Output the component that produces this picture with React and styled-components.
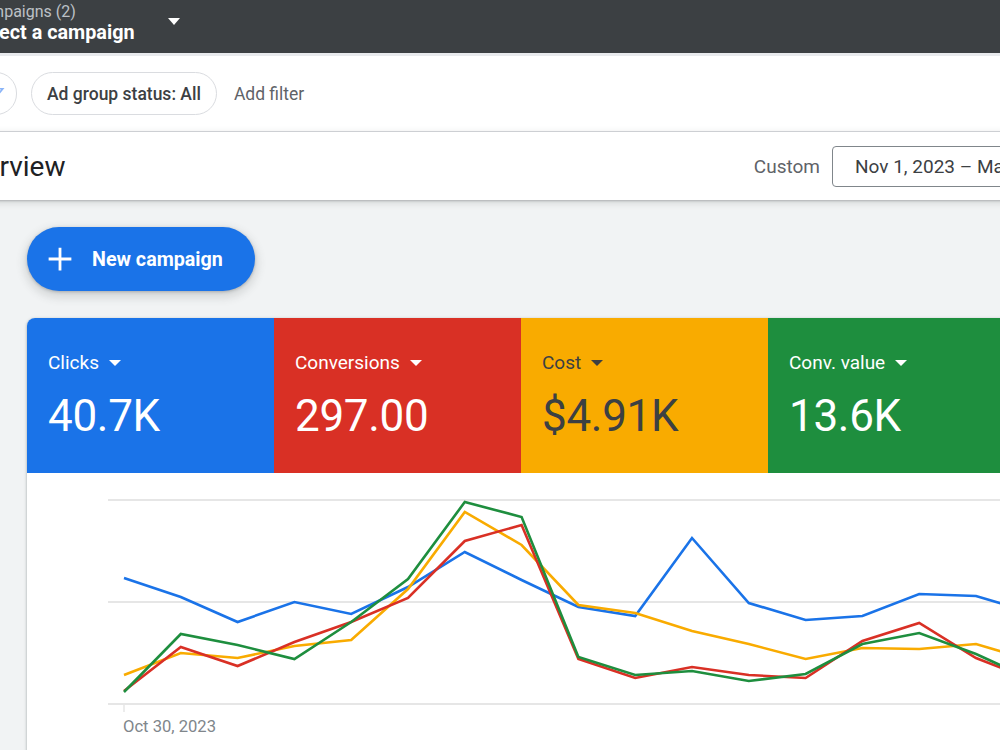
import React from "react";
import styled, { createGlobalStyle } from "styled-components";

const Global = createGlobalStyle`
  html, body { margin: 0; padding: 0; background: #f1f3f4; }
  body { font-family: Roboto, "Liberation Sans", Arial, sans-serif; }
  * { box-sizing: border-box; }
`;

const Viewport = styled.div`
  width: 1000px;
  height: 750px;
  overflow: hidden;
  background: #f1f3f4;
`;

const Page = styled.div`
  width: 1400px;
  margin-left: -200px;
`;

const TopBar = styled.div`
  height: 53px;
  background: #3c4043;
  display: flex;
  align-items: center;
  padding-left: 171px;
`;

const Picker = styled.div`
  display: flex;
  flex-direction: column;
  margin-top: -6px;
`;

const PickerLabel = styled.span`
  font-size: 16px;
  color: #bdc1c6;
  line-height: 18px;
`;

const PickerValue = styled.span`
  font-size: 19.8px;
  font-weight: 700;
  color: #ffffff;
  line-height: 24px;
`;

const Caret = styled.span`
  width: 0;
  height: 0;
  border-left: ${(p) => p.$w || 6}px solid transparent;
  border-right: ${(p) => p.$w || 6}px solid transparent;
  border-top: ${(p) => p.$h || 6}px solid ${(p) => p.$color || "#fff"};
  display: inline-block;
  margin-left: ${(p) => p.$gap || 8}px;
  align-self: ${(p) => p.$self || "center"};
  margin-top: ${(p) => p.$top || 0}px;
`;

const FilterBar = styled.div`
  height: 79px;
  border-top: 3px solid #e8eaed;
  background: #fff;
  display: flex;
  align-items: center;
  gap: 14px;
  padding-left: 175px;
  border-bottom: 1px solid #dadce0;
`;

const Chip = styled.div`
  height: 43px;
  min-width: 42px;
  border: 1px solid #dadce0;
  border-radius: 22px;
  display: flex;
  align-items: center;
  justify-content: center;
  padding: 0 ${(p) => (p.$icon ? 0 : 15)}px;
  font-size: 17.5px;
  font-weight: 500;
  color: #3c4043;
  white-space: nowrap;
`;

const AddFilter = styled.span`
  font-size: 17.5px;
  color: #5f6368;
  margin-left: 3px;
`;

const Header = styled.div`
  height: 68px;
  background: #fff;
  display: flex;
  align-items: center;
  padding: 0 8px 0 152px;
  box-shadow: 0 1px 2px rgba(60, 64, 67, 0.3), 0 2px 6px 2px rgba(60, 64, 67, 0.12);
  position: relative;
  z-index: 1;
`;

const Title = styled.h1`
  margin: 0;
  flex: 1;
  font-size: 28px;
  font-weight: 400;
  color: #202124;
`;

const RangeLabel = styled.span`
  font-size: 19px;
  color: #5f6368;
  margin-right: 12px;
`;

const DateBox = styled.div`
  width: 360px;
  height: 41px;
  border: 1px solid #80868b;
  border-radius: 4px;
  display: flex;
  align-items: center;
  padding-left: 22px;
  font-size: 19px;
  color: #3c4043;
  white-space: nowrap;
`;

const Main = styled.div`
  padding: 27px 0 0 227px;
  display: flex;
  flex-direction: column;
  align-items: flex-start;
`;

const NewButton = styled.button`
  height: 64px;
  width: 228px;
  border: none;
  border-radius: 32px;
  background: #1a73e8;
  color: #fff;
  display: flex;
  align-items: center;
  padding: 0 0 0 20px;
  gap: 19px;
  font-family: Roboto, "Liberation Sans", sans-serif;
  font-size: 19.7px;
  font-weight: 700;
  box-shadow: 0 1px 3px rgba(60, 64, 67, 0.3), 0 4px 8px 3px rgba(60, 64, 67, 0.15);
  cursor: pointer;
`;

const Card = styled.div`
  margin-top: 27px;
  width: 1150px;
  background: #fff;
  border-radius: 8px 8px 0 0;
  overflow: hidden;
  box-shadow: 0 1px 2px rgba(60, 64, 67, 0.3), 0 1px 3px 1px rgba(60, 64, 67, 0.15);
`;

const Tiles = styled.div`
  display: grid;
  grid-template-columns: repeat(4, 247px) 1fr;
  height: 155px;
`;

const Tile = styled.div`
  background: ${(p) => p.$bg};
  color: ${(p) => p.$fg};
  padding: 33px 0 0 21px;
  display: flex;
  flex-direction: column;
`;

const TileLabel = styled.div`
  display: flex;
  align-items: center;
  font-size: 19px;
  line-height: 24px;
`;

const TileValue = styled.div`
  font-size: 44px;
  font-weight: 400;
  line-height: 52px;
  margin-top: 15px;
  letter-spacing: -0.3px;
`;

const ChartArea = styled.div`
  height: 280px;
`;

const X0 = 97;
const DX = 56.8;
const series = [
  {
    color: "#1a73e8",
    ys: [578, 597, 622, 602, 614, 587, 552, 580, 607, 616, 538, 603, 620, 616, 594, 596, 613],
  },
  {
    color: "#f9ab00",
    ys: [675, 653, 658, 646, 640, 589, 512, 545, 605, 613, 631, 644, 659, 648, 649, 644, 661],
  },
  {
    color: "#d93025",
    ys: [691, 647, 666, 642, 622, 598, 541, 525, 659, 678, 667, 675, 678, 641, 623, 658, 680],
  },
  {
    color: "#1e8e3e",
    ys: [692, 634, 645, 659, 622, 579, 502, 517, 657, 675, 671, 681, 674, 644, 633, 654, 680],
  },
];

function Chart() {
  return (
    <svg width="1150" height="280" viewBox="0 0 1150 280">
      {[27, 129, 231].map((y) => (
        <line key={y} x1="81" x2="1150" y1={y} y2={y} stroke="#e6e6e6" strokeWidth="2" />
      ))}
      <line x1={X0} x2={X0} y1="231" y2="239" stroke="#e6e6e6" strokeWidth="1.5" />
      {series.map((s) => (
        <polyline
          key={s.color}
          fill="none"
          stroke={s.color}
          strokeWidth="2.6"
          strokeLinejoin="miter"
          points={s.ys.map((y, i) => `${X0 + i * DX},${y - 473}`).join(" ")}
        />
      ))}
      <text x="96" y="259" fontSize="16.6" fill="#80868b" fontFamily="Roboto, sans-serif">
        Oct 30, 2023
      </text>
    </svg>
  );
}

const tiles = [
  { label: "Clicks", value: "40.7K", bg: "#1a73e8", fg: "#fff" },
  { label: "Conversions", value: "297.00", bg: "#d93025", fg: "#fff" },
  { label: "Cost", value: "$4.91K", bg: "#f9ab00", fg: "#3c4043" },
  { label: "Conv. value", value: "13.6K", bg: "#1e8e3e", fg: "#fff" },
  { label: "Cost / conv.", value: "$16.53", bg: "#ffffff", fg: "#3c4043" },
];

export default function App() {
  return (
    <>
      <Global />
      <Viewport>
        <Page>
          <TopBar>
            <Picker>
              <PickerLabel>Campaigns (2)</PickerLabel>
              <PickerValue>Select a campaign</PickerValue>
            </Picker>
            <Caret $gap={33} $w={6.5} $h={7} $self="flex-start" $top={18} />
          </TopBar>
          <FilterBar>
            <Chip $icon>
              <svg width="18" height="18" viewBox="0 0 24 24">
                <path d="M3 5h18l-7 8.5V20l-4-2v-4.5z" fill="none" stroke="#8ab4f8" strokeWidth="2.2" />
              </svg>
            </Chip>
            <Chip>Ad group status: All</Chip>
            <AddFilter>Add filter</AddFilter>
          </FilterBar>
          <Header>
            <Title>Overview</Title>
            <RangeLabel>Custom</RangeLabel>
            <DateBox>Nov 1, 2023 – Mar 31, 2024</DateBox>
          </Header>
          <Main>
            <NewButton>
              <svg width="26" height="26" viewBox="0 0 24 24">
                <path d="M12 1.5v21M1.5 12h21" stroke="#fff" strokeWidth="2.6" fill="none" />
              </svg>
              New campaign
            </NewButton>
            <Card>
              <Tiles>
                {tiles.map((t) => (
                  <Tile key={t.label} $bg={t.bg} $fg={t.fg}>
                    <TileLabel>
                      {t.label}
                      <Caret $color={t.fg} $gap={10} />
                    </TileLabel>
                    <TileValue>{t.value}</TileValue>
                  </Tile>
                ))}
              </Tiles>
              <ChartArea>
                <Chart />
              </ChartArea>
            </Card>
          </Main>
        </Page>
      </Viewport>
    </>
  );
}
